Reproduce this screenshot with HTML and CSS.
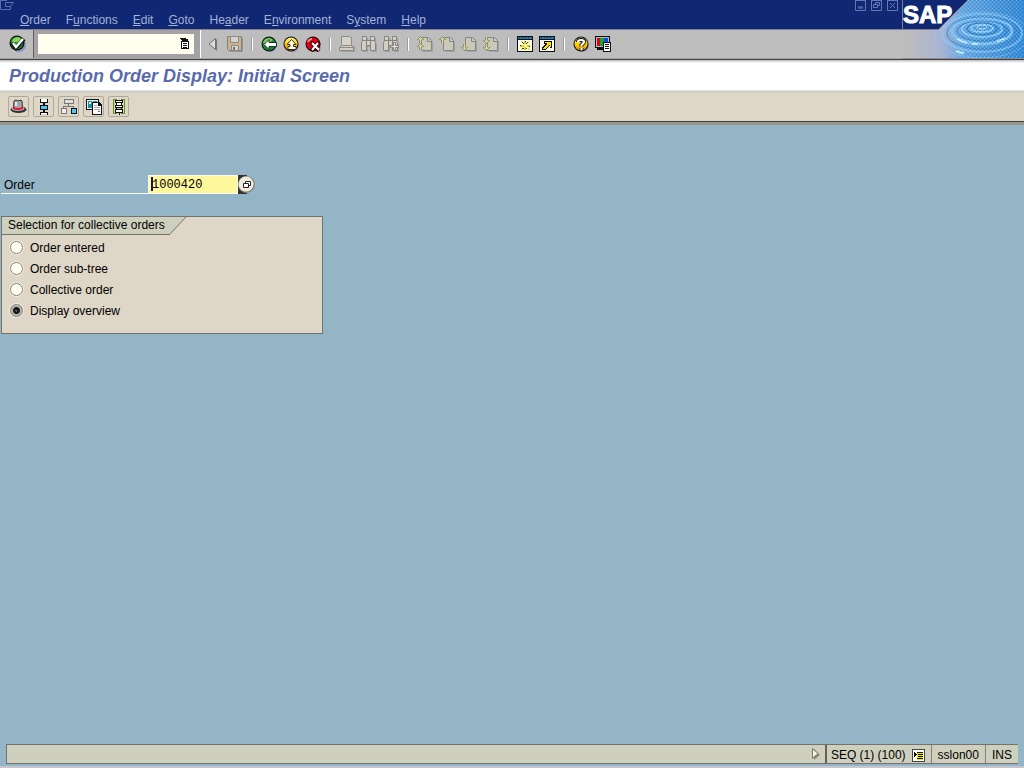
FILE: index.html
```html
<!DOCTYPE html>
<html lang="en">
<head>
    <meta charset="UTF-8">
    <meta name="viewport" content="width=device-width, initial-scale=1.0">
    <title>Production Order Display: Initial Screen</title>
    <link rel="stylesheet" href="styles.css">
</head>
<body>
    <!-- shapes shared by several toolbar icons -->
    <svg class="defs" width="0" height="0">
        <symbol id="page" viewBox="0 0 16 16">
            <path d="M6 2h7l3 4v10H6z" fill="#a2a29e"/>
            <path d="M4.500 1.500h7l3 3v10h-10z" fill="#cac8b6" stroke="#868684"/>
            <path d="M10.500 1.500v4h4" fill="none" stroke="#868684"/>
        </symbol>
        <symbol id="arrow-up" viewBox="0 0 7 7">
            <path d="M3 0h1v1h1v1h1v1h1v1H5v3H2V4H0V3h1V2h1V1h1z" fill="#8c8c7c"/>
            <path d="M3 1h1v1h1v1h1v.500H4V7H3V3.500H1V3h1V2h1z" fill="#dcd890"/>
        </symbol>
        <symbol id="arrow-down" viewBox="0 0 7 7">
            <path d="M3 7h1V6h1V5h1V4h1V3H5V0H2v3H0v1h1v1h1v1h1z" fill="#8c8c7c"/>
            <path d="M3 6h1V5h1V4h1v-.500H4V0H3v3.500H1V4h1v1h1z" fill="#dcd890"/>
        </symbol>
        <symbol id="binoculars" viewBox="0 0 16 16">
            <path d="M3 2h4v4h3V2h5v4l1 2v8h-5v-5H7v5H2z" fill="#a2a2a0"/>
            <path d="M1.500.500h4v4h4v-4h4v4l1 2v8h-5v-5h-4v5h-5v-8l1-2z" fill="#d2cec0" stroke="#848482"/>
            <path d="M5.500 4v6M9.500 4v6M1 4.500h4M10 4.500h4" stroke="#848482"/>
        </symbol>
        <linearGradient id="gold" x2="0" y2="1"><stop stop-color="#fff29a"/><stop offset=".5" stop-color="#ffd100"/><stop offset="1" stop-color="#e88a00"/></linearGradient>
    </svg>

    <header class="header">
        <div class="header-main">
            <div class="menubar">
                <svg class="system-icon" viewBox="0 0 16 12" aria-hidden="true"><path d="M7 .5H.5v9h10V7M5.500 6.500v-4h7M5.500 6.500h5l3-4h-3" /></svg>
                <nav class="menu">
                    <a href="#"><u>O</u>rder</a>
                    <a href="#">F<u>u</u>nctions</a>
                    <a href="#"><u>E</u>dit</a>
                    <a href="#"><u>G</u>oto</a>
                    <a href="#">He<u>a</u>der</a>
                    <a href="#">E<u>n</u>vironment</a>
                    <a href="#">S<u>y</u>stem</a>
                    <a href="#"><u>H</u>elp</a>
                </nav>
                <div class="window-buttons">
                    <button aria-label="Minimize"><svg viewBox="0 0 11 11"><path d="M.5 0v10.500h10V0M0 .5h11M3 8h5M3 7h5"/></svg></button>
                    <button aria-label="Restore"><svg viewBox="0 0 11 11"><path d="M.5 0v10.500h10V0M0 .5h11M4.500 4V2.500h4v3H7M2.500 4.500h4v3h-4z"/></svg></button>
                    <button aria-label="Close"><svg viewBox="0 0 11 11"><path d="M.5 0v10.500h10V0M0 .5h11M3 3l5 5M8 3l-5 5"/></svg></button>
                </div>
            </div>

            <div class="toolbar">
                <button class="enter-button" aria-label="Enter">
                    <svg viewBox="0 0 18 18">
                        <circle cx="10" cy="10" r="7" fill="#8c94c8"/>
                        <circle cx="8" cy="8" r="7.500" fill="#111"/>
                        <circle cx="8" cy="8" r="6.300" fill="#1e8c2c"/>
                        <path d="M3 7q0-4 5-5 3 0 4 2L9 7z" fill="#8ad45c"/>
                        <path d="M3 8l4 5 8-9" fill="none" stroke="#111" stroke-width="4"/>
                        <path d="M4 8l3 4 7-8" fill="none" stroke="#fff" stroke-width="2.400"/>
                    </svg>
                </button>
                <div class="command">
                    <input type="text" aria-label="Command field">
                    <button aria-label="Command history">
                        <svg viewBox="0 0 10 12" shape-rendering="crispEdges"><path d="M0 0h6v1h2v2h1v8H1V3h1V2H1V1H0z" fill="#111"/><path d="M2 4h6v6H2z" fill="#fff"/><path d="M3 5h4v1H3zM3 7h4v1H3zM3 9h4v1H3z" fill="#111"/></svg>
                    </button>
                </div>
                <div class="tools">
                    <button aria-label="Hide command field"><svg viewBox="0 0 16 16"><path d="M12 3v12L6 9z" fill="#777"/><path d="M10.500 2.500v11L4 8z" fill="#dcdcdc" stroke="#6e6e6e"/></svg></button>
                    <button aria-label="Save"><svg viewBox="0 0 16 16"><path d="M2 2h14v14H3z" fill="#959595"/><path d="M.5.5h14v14h-13l-1-1z" fill="#cbb48a" stroke="#85817a"/><path d="M3.500.5h8v6h-8zM4.500 9.500h7v5h-7z" fill="#d3d3cf" stroke="#8b8981"/><path d="M6 11h2v3H6z" fill="#77756e"/></svg></button>
                    <span class="separator"></span>
                    <button aria-label="Back"><svg viewBox="0 0 16 16"><circle cx="9.500" cy="9.500" r="6.500" fill="#8c94c8"/><circle cx="8" cy="8" r="7.500" fill="#111"/><circle cx="8" cy="8" r="6.500" fill="#14843c"/><path d="M2 7q1-5 7-5l3 2-6 4z" fill="#8cc860"/><path d="M3 8.500l5-5v3h7.500v4H8v3z" fill="#fff" stroke="#153b20"/></svg></button>
                    <button aria-label="Exit"><svg viewBox="0 0 16 16"><circle cx="9.500" cy="9.500" r="6.500" fill="#8c94c8"/><circle cx="8" cy="8" r="7.500" fill="#111"/><circle cx="8" cy="8" r="6.500" fill="url(#gold)"/><path d="M8.500 3.500l4.500 5h-2.500v2H13v3H5v-3h2v-2H4z" fill="#fff" stroke="#443200"/></svg></button>
                    <button aria-label="Cancel"><svg viewBox="0 0 16 16"><circle cx="9.500" cy="9.500" r="6.500" fill="#8c94c8"/><circle cx="8" cy="8" r="7.500" fill="#111"/><circle cx="8" cy="8" r="6.500" fill="#e00018"/><path d="M3 6q1-3 4-3" fill="none" stroke="#ff8478" stroke-width="2"/><path d="M6 6l8 9M14 6l-8 9" stroke="#400" stroke-width="4"/><path d="M7 7l7 7M13 7l-6 7" stroke="#fff" stroke-width="2"/></svg></button>
                    <span class="separator"></span>
                    <button aria-label="Print"><svg viewBox="0 0 16 16"><path d="M4 1h9v9h3v6H2z" fill="#a1a1a1"/><path d="M2.500.500h8l2 2v8h-10z" fill="#d9d3c7" stroke="#8a8a88"/><path d="M2.500 9.500l-2 2v3h14v-3l-2-2z" fill="#d2cec0" stroke="#8a8a88"/><path d="M1 11.500h13" stroke="#8a8a88"/></svg></button>
                    <button aria-label="Find"><svg viewBox="0 0 16 16"><use href="#binoculars"/></svg></button>
                    <button aria-label="Find next"><svg viewBox="0 0 16 16"><use href="#binoculars"/><path d="M10.500 6.500h2v3h3v2h-3v3h-2v-3h-3v-2h3z" fill="#e4e0d4" stroke="#848482"/></svg></button>
                    <span class="separator"></span>
                    <button aria-label="First page"><svg viewBox="0 0 16 16"><use href="#page"/><use href="#arrow-up" width="7" height="7"/><use href="#arrow-up" y="7" width="7" height="7"/></svg></button>
                    <button aria-label="Previous page"><svg viewBox="0 0 16 16"><use href="#page"/><use href="#arrow-up" width="7" height="7"/></svg></button>
                    <button aria-label="Next page"><svg viewBox="0 0 16 16"><use href="#page"/><use href="#arrow-down" y="8" width="7" height="7"/></svg></button>
                    <button aria-label="Last page"><svg viewBox="0 0 16 16"><use href="#page"/><use href="#arrow-down" y="1" width="7" height="7"/><use href="#arrow-down" y="8" width="7" height="7"/></svg></button>
                    <span class="separator"></span>
                    <button aria-label="New session"><svg viewBox="0 0 16 16" shape-rendering="crispEdges"><path d="M0 0h16v16H0z" fill="#111"/><path d="M1 4h14v11H1z" fill="#fffff4"/><path d="M1 1h14v2H1z" fill="#1c78b4"/><path d="M2 1h1v1H2zM5 1h1v1H5zM8 1h1v1H8zM11 1h1v1h-1z" fill="#103070"/><path d="M7 5h2v9H7zM3 9h10v2H3zM4 5h1v1h1v1H5V6H4zM11 6h1V5h1v1h-1v1h-1zM4 13h1v-1h1v1H5v1H4zM11 12h1v1h1v1h-1v-1h-1z" fill="#dcd000"/><path d="M5 6h1v1h1v1H6V7H5zM10 6h1v1h-1v1H9V7h1zM6 12h1v1H6zM9 12h1v1H9zM8 5h1v1H8zM3 9h1v1H3zM12 10h1v1h-1zM5 12h1v1H5z" fill="#3a3600"/><path d="M7 8h3v3H7z" fill="#fff89c"/></svg></button>
                    <button aria-label="Create shortcut"><svg viewBox="0 0 16 16" shape-rendering="crispEdges"><path d="M0 0h16v16H0z" fill="#111"/><path d="M1 4h14v11H1z" fill="#fffff4"/><path d="M1 1h14v2H1z" fill="#1c78b4"/><path d="M2 1h1v1H2zM5 1h1v1H5zM8 1h1v1H8zM11 1h1v1h-1z" fill="#103070"/><path d="M5 5h8v7h-2v-2h-1v1H9v1H8v1H7v1H3v-3h1v-1h1V9h1V8H5z" fill="#111"/><path d="M6 6h6v5h-1V9h-1v1H9v1H8v1H7v1H4v-1h1v-1h1v-1h1V9h1V7H6z" fill="#f8e400"/></svg></button>
                    <span class="separator"></span>
                    <button aria-label="Help"><svg viewBox="0 0 16 16"><circle cx="9.500" cy="9.500" r="6.500" fill="#8c94c8"/><circle cx="8" cy="8" r="7.500" fill="#111"/><circle cx="8" cy="8" r="6.500" fill="url(#gold)"/><path d="M5 6q0-2 3-2t3 2q0 1-2.500 3v1.500M8.500 12v2" fill="none" stroke="#111" stroke-width="4"/><path d="M5 6q0-2 3-2t3 2q0 1-2.500 3v1.500M8.500 12v2" fill="none" stroke="#fff" stroke-width="2.200"/></svg></button>
                    <button aria-label="Customize layout"><svg viewBox="0 0 16 16" shape-rendering="crispEdges"><path d="M0 0h15v12H0zM2 12h8v2H2z" fill="#111"/><path d="M1 1h13v10H1z" fill="#bbb"/><path d="M2 2h3v8H2z" fill="#e00020"/><path d="M5 2h4v8H5z" fill="#00b030"/><path d="M9 2h4v8H9z" fill="#2048e0"/><path d="M8 6h8v10H8z" fill="#111"/><path d="M9 7h6v8H9z" fill="#fff"/><path d="M10 8h4v1h-4zM10 10h4v1h-4zM10 12h4v1h-4z" fill="#111"/></svg></button>
                </div>
            </div>
        </div>

        <svg class="logo" viewBox="0 0 122 59" role="img" aria-label="SAP">
            <defs>
                <linearGradient id="water"><stop offset=".05" stop-color="#bdbdbd"/><stop offset=".33" stop-color="#a8b4d4"/><stop offset=".5" stop-color="#69a8df"/><stop offset="1" stop-color="#3288d4"/></linearGradient>
                <pattern id="grain" width="4" height="4" patternUnits="userSpaceOnUse"><path d="M0 0h1v1H0zM2 2h1v1H2z" fill="#1b68b8"/><path d="M2 0h1v1H2zM0 2h1v1H0z" fill="#9cd4f8"/></pattern>
                <linearGradient id="fade"><stop offset=".3" stop-color="#000"/><stop offset=".7" stop-color="#fff"/></linearGradient>
                <mask id="grain-mask"><rect width="122" height="59" fill="url(#fade)"/></mask>
            </defs>
            <rect width="122" height="59" fill="url(#water)"/>
            <g fill="none" stroke="#8accfa">
                <ellipse cx="80" cy="27" rx="5" ry="2" stroke="#c4ecff"/>
                <ellipse cx="80" cy="28" rx="11" ry="4" stroke-width="2"/>
                <ellipse cx="80" cy="29" rx="20" ry="8" stroke-width="2"/>
                <ellipse cx="80" cy="31" rx="30" ry="13" stroke-width="3" stroke="#83c3f4"/>
                <ellipse cx="80" cy="33" rx="40" ry="19" stroke-width="2" opacity=".7"/>
                <ellipse cx="80" cy="35" rx="47" ry="23" opacity=".5"/>
                <ellipse cx="80" cy="29" rx="15" ry="6" stroke="#2a74bc"/>
                <ellipse cx="80" cy="31" rx="25" ry="10" stroke="#3984ca"/>
                <ellipse cx="80" cy="33" rx="35" ry="16" stroke="#4989cb"/>
                <path d="M55 39q5 3 10 4M70 44h6M54 51q4 2 8 2M95 41q5-1 8-3" stroke="#ccefff" stroke-width="2"/>
            </g>
            <rect width="122" height="59" fill="url(#grain)" opacity=".5" mask="url(#grain-mask)"/>
            <path d="M0 0h66L37 29H0z" fill="#102873"/>
            <path d="M66 0L37 29M0 29.500h37M.5 0v29" stroke="#837f87"/>
            <path d="M0 58.500h122" stroke="#8c8c98"/>
            <text class="logo-text" x="1" y="23">SAP</text>
        </svg>
    </header>

    <h1 class="title">Production Order Display: Initial Screen</h1>

    <div class="app-toolbar">
        <button aria-label="Header"><svg viewBox="0 0 17 17"><ellipse cx="8.500" cy="11.500" rx="8" ry="3.500" fill="#333"/><ellipse cx="8" cy="10.500" rx="6.500" ry="2.500" fill="#b4b0bc"/><path d="M3.500 10L4 3l2-1 2 1 3-1 1 1 .5 7q-4.500 2-9 0z" fill="#a5a5ae" stroke="#333"/><path d="M5 4h2v4H5z" fill="#e8e8ec"/><path d="M3 8.500q5 3 10 0v2.500q-5 2-10 0z" fill="#e41830"/></svg></button>
        <button aria-label="Operation overview"><svg viewBox="0 0 17 17" shape-rendering="crispEdges"><path d="M5 1h8v4h-3v2h3v5h-3v2h3v3h-1v-2H6v2H5v-3h3v-2H5V7h3V5H5z" fill="#111"/><path d="M6 1h6v3H6z" fill="#fff"/><path d="M6 8h6v3H6z" fill="#4dc8f4"/><path d="M6 15h6v1H6z" fill="#fff"/></svg></button>
        <button aria-label="Component overview"><svg viewBox="0 0 17 17" shape-rendering="crispEdges"><path d="M4 1h10v5H9v2h5v3h-1V9H4v2H3V8h5V6H4z" fill="#777"/><path d="M5 2h8v3H5z" fill="#ddd"/><path d="M1 10h6v6H1z" fill="#777"/><path d="M2 11h4v4H2z" fill="#eee"/><path d="M11 10h6v6h-6z" fill="#111"/><path d="M12 11h4v4h-4z" fill="#50c8f4"/></svg></button>
        <button aria-label="Documents"><svg viewBox="0 0 17 17" shape-rendering="crispEdges"><path d="M1 1h13v11H1z" fill="#111"/><path d="M2 2h11v9H2z" fill="#e8f4f4"/><path d="M3 3h4v7H3zM8 3h4v2H8z" fill="#2090a4"/><path d="M4 4h2v2H4z" fill="#fff"/><path d="M7 4h7l3 3v10H7z" fill="#111"/><path d="M8 5h5v3h3v8H8z" fill="#fff"/><path d="M9 7h3v1H9zM9 9h6v1H9zM9 11h6v1H9z" fill="#aaa"/><path d="M13 13h2v1h-2z" fill="#e03030"/></svg></button>
        <button aria-label="Sequence"><svg viewBox="0 0 17 17" shape-rendering="crispEdges"><path d="M3 1h4v2H5v11h2v2H3zM11 1h4v15h-4v-2h2V3h-2z" fill="#6b8726"/><path d="M4 2h1v13H4zM13 2h1v13h-1z" fill="#d4e480"/><path d="M5 2h8v3h-1v2h1v3h-1v1h1v4h-3v2H9v-2H5v-4h1v-1H5V7h1V5H5z" fill="#111"/><path d="M6 3h6v1H6zM7 5h4v2H7zM6 8h6v1H6zM6 12h6v2H6z" fill="#fff"/><path d="M7 10h4v1H7z" fill="#9cbcc4"/></svg></button>
    </div>

    <main class="content">
        <div class="order-row">
            <label for="order">Order</label>
            <div class="order-field">
                <input type="text" id="order" value="1000420">
                <span class="caret"></span>
            </div>
            <button class="match-button" aria-label="Search order"><svg viewBox="0 0 17 19"><path d="M0 0h9v19H0z" fill="#333"/><circle cx="8.500" cy="9.500" r="8.500" fill="#8b8980"/><circle cx="8" cy="9" r="7.500" fill="#f0ecdf"/><path d="M7.500 8V6.500h5v4H11M5.500 8.500h5v4h-5z" fill="#fff" stroke="#222"/></svg></button>
        </div>

        <fieldset class="group">
            <legend class="group-title">
                <span>Selection for collective orders</span>
                <svg viewBox="0 0 17 18" aria-hidden="true"><path d="M0 0h17L0 18z" fill="#cecfbd"/><path d="M17 0L0 18" stroke="#73736b"/></svg>
            </legend>
            <label class="option"><input type="radio" name="selection"> Order entered</label>
            <label class="option"><input type="radio" name="selection"> Order sub-tree</label>
            <label class="option"><input type="radio" name="selection"> Collective order</label>
            <label class="option"><input type="radio" name="selection" checked> Display overview</label>
        </fieldset>
    </main>

    <footer class="statusbar">
        <div class="message">
            <button aria-label="Hide status fields"><svg viewBox="0 0 10 14"><path d="M3 2v11l6-5z" fill="#8b8b80"/><path d="M1.500 1.500v10L7 6.500z" fill="#f2f2e8" stroke="#77776c"/></svg></button>
        </div>
        <div class="status-cell">
            SEQ (1) (100)
            <button aria-label="System data"><svg viewBox="0 0 13 13" shape-rendering="crispEdges"><path d="M0 0h13v13H0z" fill="#444"/><path d="M1 1h11v11H1z" fill="#fff"/><path d="M5 3h6v8H5z" fill="#f4e800"/><path d="M2 3h1v1h1v1h1v1H4v1H3v1H2zM5 3h6v1H5zM6 5h5v1H6zM6 7h5v1H6zM5 9h6v1H5z" fill="#111"/></svg></button>
        </div>
        <div class="status-cell">sslon00</div>
        <div class="status-cell">INS</div>
    </footer>
</body>
</html>
```

FILE: styles.css
```css
* {
    box-sizing: border-box;
}
body {
    display: flex;
    flex-direction: column;
    min-height: 100vh;
    margin: 0;
    background-color: #94b5c6;
    border-bottom: 2px solid #c6c7ce;
    color: #000;
    font-family: "Liberation Sans", Arial, sans-serif;
    font-size: 12px;
    line-height: 16px;
}
button {
    padding: 0;
    border: none;
    background: none;
    cursor: pointer;
}
button svg {
    display: block;
}
input {
    margin: 0;
    outline: none;
}
.defs {
    position: absolute;
}

/* menu and system toolbar */
.header {
    display: flex;
    border-bottom: 1px solid #424142;
}
.header-main {
    flex: 1;
}
.menubar {
    display: flex;
    height: 29px;
    background-color: #102873;
}
.system-icon {
    width: 16px;
    height: 12px;
    fill: none;
    stroke: #5a6eae;
}
.menu {
    display: flex;
    flex: 1;
    align-items: flex-end;
    gap: 15px;
    padding: 0 4px 1px;
}
.menu a {
    color: #a5b2d6;
    text-decoration: none;
}
.window-buttons {
    display: flex;
    align-items: flex-start;
    gap: 5px;
    padding-right: 4px;
}
.window-buttons svg {
    width: 11px;
    height: 11px;
    fill: none;
    stroke: #6878b4;
}
.toolbar {
    display: flex;
    height: 30px;
    background-color: #bdbdbd;
    border-top: 1px solid #84828c;
    border-bottom: 1px solid #a5a5a5;
}
.enter-button {
    width: 34px;
    padding-left: 9px;
    border-right: 1px solid #636163;
}
.enter-button svg {
    width: 18px;
    height: 18px;
}
.command {
    display: flex;
    padding: 4px 6px 4px 4px;
    background-color: #a5a2a5;
    border-right: 1px solid #fff;
}
.command input {
    width: 136px;
    border: none;
    background-color: #fffff0;
}
.command button {
    width: 20px;
    padding-left: 6px;
    background-color: #fffff0;
}
.command svg {
    width: 10px;
    height: 12px;
}
.tools {
    display: flex;
    align-items: center;
    padding-left: 1px;
}
.tools button {
    padding: 3px;
}
.tools svg {
    width: 16px;
    height: 16px;
}
.separator {
    width: 2px;
    height: 13px;
    margin: 0 5px;
    border-left: 1px solid #9c9c9c;
    border-right: 1px solid #fff;
}
.logo {
    width: 122px;
    height: 59px;
}
.logo-text {
    fill: #fff;
    stroke: #fff;
    font-family: "Liberation Sans", Arial, sans-serif;
    font-size: 24px;
    font-weight: bold;
}

/* title and application toolbar */
.title {
    margin: 0;
    padding: 5px 9px 3px;
    background: linear-gradient(#bdbdbd, #fff 3px);
    border-bottom: 1px solid #dedfde;
    color: #5a6bad;
    font-size: 18px;
    font-style: italic;
    line-height: 22px;
}
.app-toolbar {
    display: flex;
    gap: 4px;
    padding: 3px 8px 4px;
    background-color: #ded6c6;
    border-top: 2px solid #cecfc6;
    border-bottom: 1px solid #424142;
    box-shadow: 0 3px 0 #9c9689;
}
.app-toolbar button {
    padding: 1px;
    border: 1px solid #adaa9c;
    border-radius: 2px;
}
.app-toolbar svg {
    width: 17px;
    height: 17px;
}

/* selection screen */
.content {
    flex: 1;
    padding: 53px 1px 0;
}
.order-row {
    display: flex;
    height: 19px;
}
.order-row label {
    width: 147px;
    padding: 2px 3px 0;
    border-bottom: 1px solid #fffff0;
}
.order-field {
    position: relative;
}
.order-field input {
    display: block;
    width: 90px;
    height: 19px;
    padding: 0 3px;
    border: 1px solid #fffff0;
    background-color: #fff79c;
    font-family: "Liberation Mono", "Courier New", monospace;
    font-size: 12px;
}
.caret {
    position: absolute;
    top: 2px;
    left: 3px;
    width: 2px;
    height: 14px;
    background-color: #101852;
}
.match-button svg {
    width: 17px;
    height: 19px;
}
.group {
    width: 322px;
    margin: 22px 0 0;
    padding: 0 0 12px;
    border: 1px solid #73736b;
    background-color: #ded6c6;
}
.group-title {
    display: flex;
    float: left;
    height: 18px;
    margin-bottom: 2px;
    padding: 0;
}
.group-title span {
    padding: 0 0 0 6px;
    width: 167px;
    background-color: #cecfbd;
    border-bottom: 1px solid #73736b;
    white-space: nowrap;
}
.group-title svg {
    width: 17px;
    height: 18px;
}
.option {
    display: flex;
    clear: both;
    align-items: center;
    gap: 7px;
    height: 21px;
    padding-left: 8px;
}
.option input {
    appearance: none;
    width: 13px;
    height: 13px;
    border: 1px solid #84827b;
    border-radius: 50%;
    background-color: #fffff0;
    box-shadow: 0 0 0 1px #efebde;
}
.option input:checked {
    background: radial-gradient(circle, #567 0 1px, #181818 1px 3px, #b5b5ac 4px);
}

/* status bar */
.statusbar {
    display: flex;
    height: 20px;
    margin: 0 6px 2px;
    background-color: #cecfbd;
    border: 1px solid #73736b;
    border-right: none;
}
.message {
    display: flex;
    flex: 1;
    align-items: center;
    justify-content: flex-end;
    padding-right: 4px;
}
.message svg {
    width: 10px;
    height: 14px;
}
.status-cell {
    display: flex;
    align-items: center;
    gap: 6px;
    padding: 2px 6px 0;
    border-left: 1px solid #84827b;
}
.message + .status-cell {
    border-left: 2px solid #63615a;
    padding-left: 4px;
}
.status-cell svg {
    width: 13px;
    height: 13px;
}
```
